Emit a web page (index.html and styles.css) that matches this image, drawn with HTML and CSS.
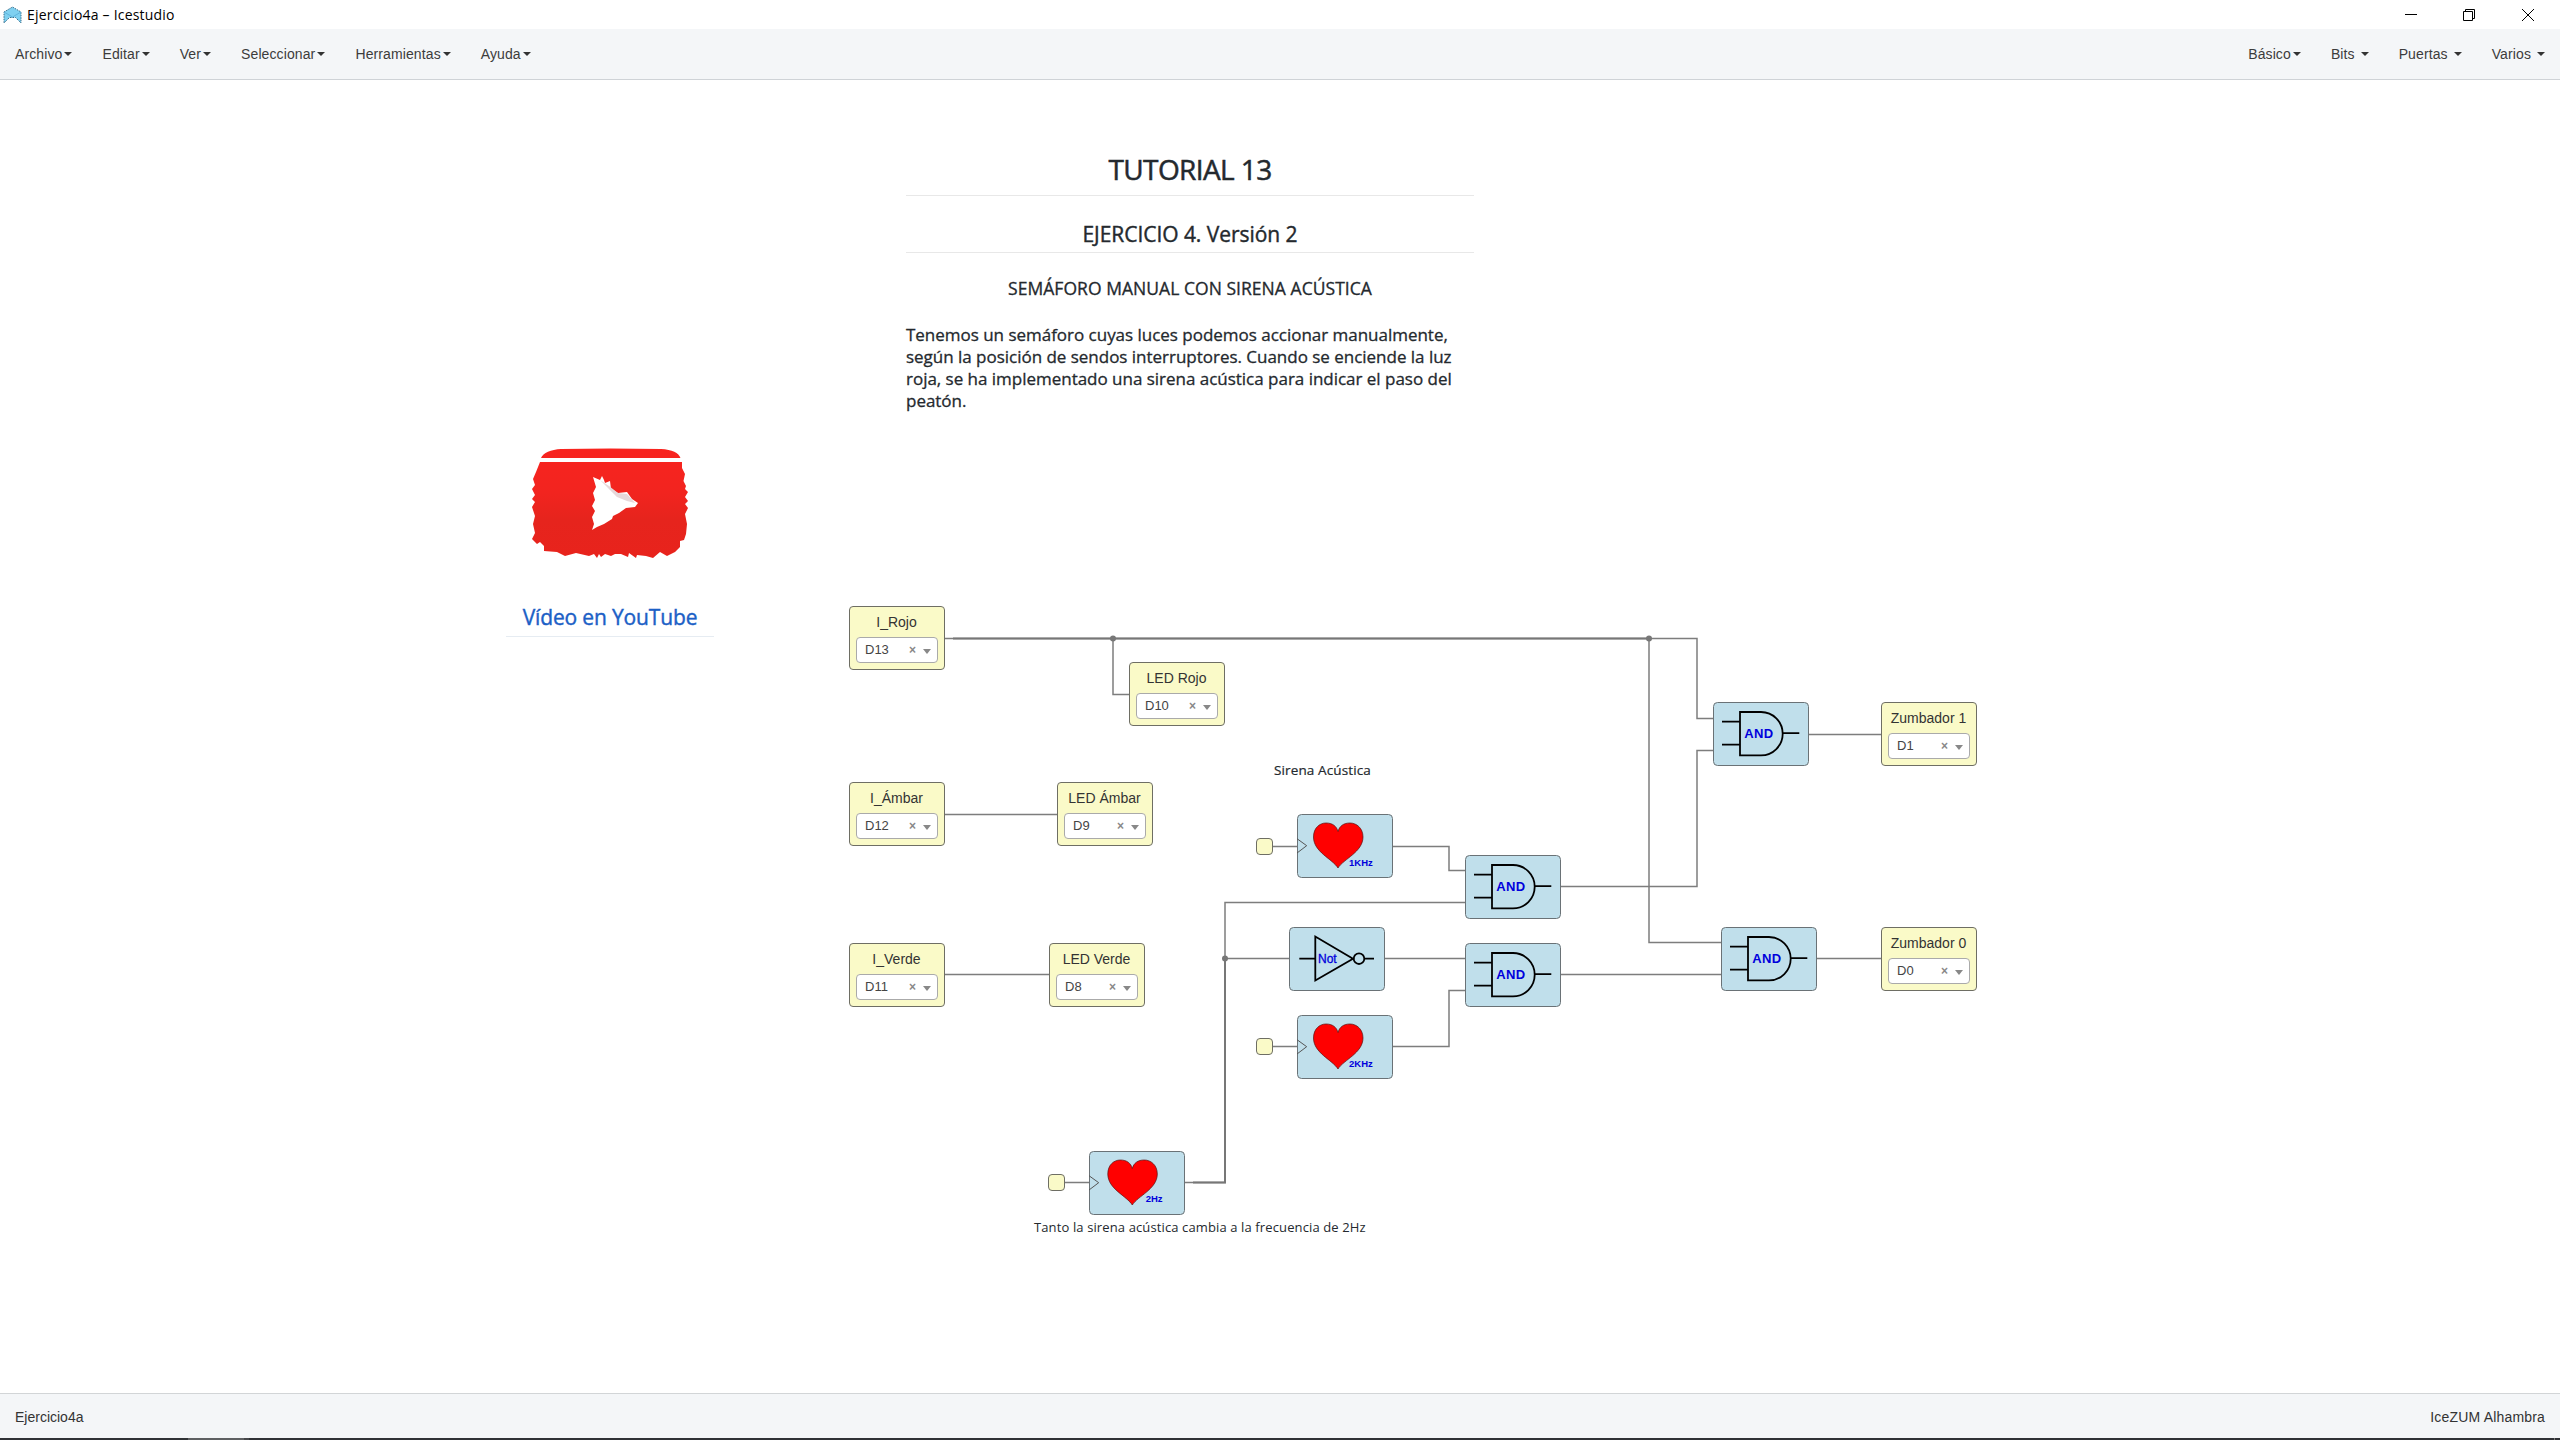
FILE: index.html
```html
<!DOCTYPE html>
<html lang="es">
<head>
<meta charset="utf-8">
<title>Ejercicio4a – Icestudio</title>
<link rel="stylesheet" href="styles.css">
</head>
<body>
<header class="titlebar">
  <svg class="app-icon" width="19" height="18" viewBox="0 0 19 18"><path d="M1 6 9.500 1 18 6V17L12.500 11.500H6.500L1 17Z" fill="#7fd0f0" stroke="#3a6f8c" stroke-dasharray="1.500 1"/><path d="M1 6 9.500 11 18 6" fill="none" stroke="#5fb4dc"/></svg>
  <span class="window-title">Ejercicio4a – Icestudio</span>
  <div class="window-buttons">
    <svg width="12" height="12" viewBox="0 0 12 12"><path d="M0 5.500H12"/></svg>
    <svg width="12" height="12" viewBox="0 0 12 12"><path d="M.5 2.500H9.500V11.500H.5ZM2.500 2.500V.5H11.500V9.500H9.500"/></svg>
    <svg width="12" height="12" viewBox="0 0 12 12"><path d="M0 0 12 12M12 0 0 12"/></svg>
  </div>
</header>
<nav class="menubar">
  <div class="menu-group">
    <a class="menu">Archivo<i class="caret"></i></a>
    <a class="menu">Editar<i class="caret"></i></a>
    <a class="menu">Ver<i class="caret"></i></a>
    <a class="menu">Seleccionar<i class="caret"></i></a>
    <a class="menu">Herramientas<i class="caret"></i></a>
    <a class="menu">Ayuda<i class="caret"></i></a>
  </div>
  <div class="menu-group">
    <a class="menu">Básico<i class="caret"></i></a>
    <a class="menu">Bits <i class="caret"></i></a>
    <a class="menu">Puertas <i class="caret"></i></a>
    <a class="menu">Varios <i class="caret"></i></a>
  </div>
</nav>
<main class="canvas">
  <svg class="wires" width="2560" height="1313" viewBox="0 80 2560 1313">
    <g class="wire">
      <path d="M945 638.500H1697V718.500H1713"/>
      <path d="M1113 638.500V694.500H1129"/>
      <path d="M1649 638.500V942.500H1721"/>
      <path d="M945 814.500H1057M945 974.500H1049"/>
      <path d="M1809 734.500H1881M1817 958.500H1881"/>
      <path d="M1561 886.500H1697V750.500H1713"/>
      <path d="M1561 974.500H1721M1385 958.500H1465"/>
      <path d="M1273 846.500H1297M1393 846.500H1449V870.500H1465"/>
      <path d="M1273 1046.500H1297M1393 1046.500H1449V990.500H1465"/>
      <path d="M1065 1182.500H1089M1185 1182.500H1225V902.500H1465M1225 958.500H1289"/>
    </g>
    <path class="wire shared" d="M953 638.500H1649M1225 958.500V1182.500H1193"/>
    <g class="joint"><circle cx="1113" cy="638.500" r="3"/><circle cx="1649" cy="638.500" r="3"/><circle cx="1225" cy="958.500" r="3"/></g>
  </svg>

  <section class="note tutorial">
    <h1>TUTORIAL 13</h1>
    <h2>EJERCICIO 4. Versión 2</h2>
    <h3>SEMÁFORO MANUAL CON SIRENA ACÚSTICA</h3>
    <p>Tenemos un semáforo cuyas luces podemos accionar manualmente,<br>según la posición de sendos interruptores. Cuando se enciende la luz<br>roja, se ha implementado una sirena acústica para indicar el paso del<br>peatón.</p>
  </section>
  <section class="note video">
    <svg width="158" height="112" viewBox="531 447 158 112">
      <defs><linearGradient id="red" x1="0" y1="0" x2="0" y2="1"><stop offset="0" stop-color="#f8241f"/><stop offset=".4" stop-color="#f2241f"/><stop offset=".65" stop-color="#e6241d"/><stop offset="1" stop-color="#e8231c"/></linearGradient></defs>
      <path fill="url(#red)" d="M541 458C543 453 551 449.500 561 449Q610 448 661 449C672 449.500 679 453 680.500 458ZM540 462H682L682 468 685 474 683.500 481 686 486 685 489 688 492 685 497 688 501 685 504 688 508 685 514 687 524 686 534 684 540 680 541 680 547 675 552 667 556 660 552 653 558 646 556 637 555 636 558 629 553 628 557 621 554 615 554 611 556 605 554 601 557 599 554 597 558 594 554 589 556 576 553 565 556 557 552 544 551 544 546 540 542 537 544 532 539 535 533 533 524 535 516 532 507 535 502 532 499 535 495 532 489 535 485 533 479 536 472Z"/>
      <path fill="#fff" d="M593 477 600 480 602 476 604 480 605 483 610 481 611 489 618 493 627 492 632 499 638 503 635 507 626 508 619 513 613 516 612 519 604 524 597 527 592 530 594 524 592 517 595 511 592 506 595 500 593 493 596 487Z"/>
      <path fill="#e6d8da" d="M600 480 609 486 618 493 627 494 635 503 627 501 617 497 608 488Z"/>
    </svg>
    <h2>Vídeo en YouTube</h2>
  </section>
  <p class="note siren">Sirena Acústica</p>
  <p class="note caption">Tanto la sirena acústica cambia a la frecuencia de 2Hz</p>

  <div class="io i-rojo"><b>I_Rojo</b><div class="pin"><span>D13</span><i>×</i><u></u></div></div>
  <div class="io led-rojo"><b>LED Rojo</b><div class="pin"><span>D10</span><i>×</i><u></u></div></div>
  <div class="io i-ambar"><b>I_Ámbar</b><div class="pin"><span>D12</span><i>×</i><u></u></div></div>
  <div class="io led-ambar"><b>LED Ámbar</b><div class="pin"><span>D9</span><i>×</i><u></u></div></div>
  <div class="io i-verde"><b>I_Verde</b><div class="pin"><span>D11</span><i>×</i><u></u></div></div>
  <div class="io led-verde"><b>LED Verde</b><div class="pin"><span>D8</span><i>×</i><u></u></div></div>
  <div class="io zumbador-1"><b>Zumbador 1</b><div class="pin"><span>D1</span><i>×</i><u></u></div></div>
  <div class="io zumbador-0"><b>Zumbador 0</b><div class="pin"><span>D0</span><i>×</i><u></u></div></div>

  <i class="clock clock-1k"></i><i class="clock clock-2k"></i><i class="clock clock-2"></i>

  <svg class="defs" width="0" height="0">
    <defs>
      <path id="and" d="M27 10H48A21.700 21.700 0 0 1 48 53.400H27ZM9 19.700H27M9 42.700H27M69.700 31.200H86.300"/>
      <path id="heart" d="M25.500 46C20 37 1 30 1 15C1 6 7 1 13.500 1C20 1 24 4 25.500 9.500C27 4 31 1 37.500 1C44 1 50.500 6 50.500 15C50.500 30 31 37 25.500 46Z"/>
    </defs>
  </svg>
  <svg class="block and-top" viewBox="0 0 96 64"><rect class="body" x=".5" y=".5" width="95" height="63" rx="4"/><use class="gate" href="#and"/><text class="and-text" x="31.300" y="35.700">AND</text></svg>
  <svg class="block and-low" viewBox="0 0 96 64"><rect class="body" x=".5" y=".5" width="95" height="63" rx="4"/><use class="gate" href="#and"/><text class="and-text" x="31.300" y="35.700">AND</text></svg>
  <svg class="block and-mid1" viewBox="0 0 96 64"><rect class="body" x=".5" y=".5" width="95" height="63" rx="4"/><use class="gate" href="#and"/><text class="and-text" x="31.300" y="35.700">AND</text></svg>
  <svg class="block and-mid2" viewBox="0 0 96 64"><rect class="body" x=".5" y=".5" width="95" height="63" rx="4"/><use class="gate" href="#and"/><text class="and-text" x="31.300" y="35.700">AND</text></svg>
  <svg class="block not" viewBox="0 0 96 64"><rect class="body" x=".5" y=".5" width="95" height="63" rx="4"/><path class="gate" d="M10.300 31.700H26.300M26.300 9.500V53.500L64 31.700ZM75.500 31.700H85"/><circle class="gate" cx="70" cy="31.700" r="5.300"/><text class="not-text" x="29" y="35.500">Not</text></svg>
  <svg class="block osc-1k" viewBox="0 0 96 64"><rect class="body" x=".5" y=".5" width="95" height="63" rx="4"/><path class="clk" d="M0 24.700 9.700 31.700 0 39"/><use class="heart" href="#heart" x="15.500" y="8"/><text class="hz" x="52" y="51.700">1KHz</text></svg>
  <svg class="block osc-2k" viewBox="0 0 96 64"><rect class="body" x=".5" y=".5" width="95" height="63" rx="4"/><path class="clk" d="M0 24.700 9.700 31.700 0 39"/><use class="heart" href="#heart" x="15.500" y="8"/><text class="hz" x="52" y="51.700">2KHz</text></svg>
  <svg class="block osc-2" viewBox="0 0 96 64"><rect class="body" x=".5" y=".5" width="95" height="63" rx="4"/><path class="clk" d="M0 24.700 9.700 31.700 0 39"/><use class="heart" href="#heart" x="17.800" y="8"/><text class="hz" x="56.700" y="51.400">2Hz</text></svg>
</main>
<footer class="statusbar"><span>Ejercicio4a</span><span class="board">IceZUM Alhambra</span></footer>
<div class="taskbar"><i class="task"></i><i class="task-edge"></i><i class="show-desktop"></i></div>
</body>
</html>
```
FILE: styles.css
```css
* { box-sizing: border-box; }
body { margin: 0; width: 2560px; height: 1440px; display: flex; flex-direction: column; overflow: hidden; background: #fff; color: #333; font: 14px/20px "Liberation Sans", Arial, sans-serif; }
h1, h2, h3, p { margin: 0; }

.titlebar { height: 29px; display: flex; align-items: center; padding: 0 26px 0 3px; }
.app-icon { flex: none; }
.window-title { margin-left: 5px; font: 14px/20px "Open Sans", sans-serif; color: #000; letter-spacing: .2px; white-space: nowrap; }
.window-buttons { margin-left: auto; display: flex; gap: 47px; }
.window-buttons svg { fill: none; stroke: #000; stroke-width: 1; }
.window-buttons svg:first-child { margin-right: -1px; }

.menubar { height: 51px; display: flex; justify-content: space-between; background: #f4f6f8; border-bottom: 1px solid #cfd3d7; }
.menu-group { display: flex; }
.menu { display: flex; align-items: center; padding: 0 15px; white-space: pre; color: #3c3c3c; letter-spacing: .11px; }
.caret { margin-left: 2px; border: 4px solid transparent; border-top-color: #333; border-bottom: 0; }

.canvas { position: relative; flex: 1; }
.wires { display: block; position: absolute; left: 0; top: 0; }
.wire { fill: none; stroke: #7d7d7d; stroke-width: 1.500; }
.shared { stroke: #777; stroke-width: 2; }
.joint { fill: #777; }

.note { position: absolute; font-family: "Open Sans", "Noto Sans", sans-serif; color: #24292e; white-space: nowrap; }
.tutorial { left: 906px; top: 70px; width: 568px; -webkit-text-stroke: .3px currentColor; }
.tutorial h1, .tutorial h2, .tutorial h3 { text-align: center; font-weight: 500; }
.tutorial h1 { height: 46px; font-size: 28px; line-height: 39px; letter-spacing: -.6px; border-bottom: 1px solid #e8e8e8; -webkit-text-stroke-width: .5px; }
.tutorial h2 { margin-top: 20px; height: 37px; font-size: 21px; line-height: 37px; letter-spacing: -.05px; border-bottom: 1px solid #e8e8e8; -webkit-text-stroke-width: .4px; }
.tutorial h3 { margin-top: 23px; font-size: 17.500px; line-height: 24px; letter-spacing: .04px; }
.tutorial p { margin-top: 24px; font-size: 17px; line-height: 22px; font-weight: 500; letter-spacing: -.02px; }
.video { left: 506px; top: 367px; width: 208px; display: flex; flex-direction: column; align-items: center; }
.video h2 { width: 208px; margin-top: 42px; height: 36px; text-align: center; font-size: 21px; line-height: 33px; font-weight: 500; letter-spacing: -.15px; color: #1b60c6; border-bottom: 1px solid #e6ecf2; -webkit-text-stroke: .4px currentColor; }
.siren { left: 1274px; top: 680px; font-size: 13.500px; font-weight: 500; letter-spacing: .12px; -webkit-text-stroke: .2px currentColor; }
.caption { left: 1034px; top: 1137px; font-size: 13px; letter-spacing: .12px; }

.io { position: absolute; width: 96px; height: 64px; padding: 5px 6px 6px; display: flex; flex-direction: column; background: #fafac8; border: 1px solid #6e6e64; border-radius: 4px; }
.io b { font-weight: 400; text-align: center; color: #333; line-height: 20px; white-space: nowrap; margin: 0 -3px 5px -4px; }
.pin { height: 26px; display: flex; align-items: center; background: #fff; border: 1px solid #aaa; border-radius: 4px; padding: 0 6px 0 8px; font-size: 13px; line-height: 24px; color: #444; }
.pin i { margin-left: auto; font: bold 12px/24px "Liberation Sans", sans-serif; color: #888; }
.pin u { flex: none; margin: 3px 0 0 7px; border: 4px solid transparent; border-top: 5px solid #888; border-bottom: 0; }
.i-rojo { left: 849px; top: 526px; }
.led-rojo { left: 1129px; top: 582px; }
.i-ambar { left: 849px; top: 702px; }
.led-ambar { left: 1057px; top: 702px; }
.i-verde { left: 849px; top: 863px; }
.led-verde { left: 1049px; top: 863px; }
.zumbador-1 { left: 1881px; top: 622px; }
.zumbador-0 { left: 1881px; top: 847px; }

.clock { position: absolute; width: 17px; height: 17px; background: #fafac8; border: 1px solid #6e6e64; border-radius: 4px; }
.clock-1k { left: 1256px; top: 758px; }
.clock-2k { left: 1256px; top: 958px; }
.clock-2 { left: 1048px; top: 1094px; }

.defs { position: absolute; }
.block { position: absolute; width: 96px; height: 64px; font-family: "Liberation Sans", sans-serif; }
.block text { fill: #0000dc; }
.body { fill: #c0dfeb; stroke: #6a7276; }
.gate { fill: none; stroke: #000; stroke-width: 1.800; }
.heart { fill: #f00; stroke: #511; stroke-width: .7; }
.clk { fill: none; stroke: #555; }
.and-text { font-size: 13px; font-weight: 700; letter-spacing: .4px; }
.not-text { font-size: 12px; stroke: #0000dc; stroke-width: .3; }
.hz { font-size: 9.500px; font-weight: 700; }
.and-top { left: 1713px; top: 622px; }
.and-low { left: 1721px; top: 847px; }
.and-mid1 { left: 1465px; top: 775px; }
.and-mid2 { left: 1465px; top: 863px; }
.not { left: 1289px; top: 847px; }
.osc-1k { left: 1297px; top: 734px; }
.osc-2k { left: 1297px; top: 935px; }
.osc-2 { left: 1089px; top: 1071px; }

.statusbar { height: 45px; display: flex; justify-content: space-between; align-items: center; padding: 1px 15px 0; background: #f4f6f8; border-top: 1px solid #d2d5d7; }
.board { letter-spacing: .18px; }
.taskbar { height: 2px; display: flex; background: #303236; }
.task { margin-left: 188px; width: 56px; background: #5e6062; }
.task-edge { width: 5px; background: #45474a; }
.show-desktop { margin-left: auto; margin-right: 5px; width: 1px; background: #777; }
```
